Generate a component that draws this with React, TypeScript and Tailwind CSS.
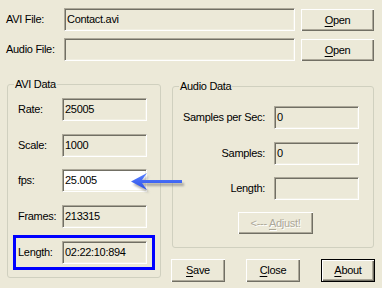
import React from 'react';

const sunken =
  'h-[23px] border border-t-[#aca899] border-l-[#aca899] border-b-white border-r-white shadow-[inset_1px_1px_0_#716f64,inset_-1px_-1px_0_#f1efe2] flex items-center pl-[2px] whitespace-nowrap';

const raised =
  'flex items-center justify-center bg-[#ece9d8] shadow-[inset_1px_1px_0_#ffffff,inset_-1px_-1px_0_#716f64,inset_-2px_-2px_0_#aca899]';

function Field({ value, className }: { value?: string; className: string }) {
  return <div className={`${sunken} ${className}`}>{value}</div>;
}

function Btn({ label, under, className }: { label: string; under: string; className: string }) {
  const rest = label.slice(under.length);
  return (
    <div className={`${raised} ${className}`}>
      <span>
        <span className="underline underline-offset-2">{under}</span>
        {rest}
      </span>
    </div>
  );
}

function AviRow({ label, value, white }: { label: string; value: string; white?: boolean }) {
  return (
    <div className="flex items-center pl-[5px]">
      <span className="w-[44px]">{label}</span>
      <Field value={value} className={white ? 'w-[85px] bg-white' : 'w-[85px] bg-[#ece9d8]'} />
    </div>
  );
}

function AudioRow({ label, value }: { label: string; value: string }) {
  return (
    <div className="flex items-center">
      <span className="w-[92px] text-right">{label}</span>
      <Field value={value} className="ml-[9px] w-[85px] bg-[#ece9d8]" />
    </div>
  );
}

export default function App() {
  return (
    <div className="relative w-[382px] h-[288px] overflow-hidden bg-[#ece9d8] text-black text-[11px] tracking-[-0.3px] font-['Liberation_Sans',Arial,sans-serif]">
      <div className="flex flex-col pt-[8px] pl-[6px]">
        {/* File rows */}
        <div className="flex items-start">
          <span className="w-[58px] leading-[23px]">AVI File:</span>
          <Field value="Contact.avi" className="w-[231px] bg-[#ece9d8]" />
          <Btn label="Open" under="O" className="ml-[6px] mt-[1px] w-[73px] h-[22px]" />
        </div>
        <div className="flex items-start mt-[7px]">
          <span className="w-[58px] leading-[23px]">Audio File:</span>
          <Field className="w-[231px] bg-[#ece9d8]" />
          <Btn label="Open" under="O" className="ml-[6px] mt-[1px] w-[73px] h-[22px]" />
        </div>

        <div className="flex items-start mt-[16px]">
          {/* AVI Data */}
          <fieldset className="m-0 p-0 ml-[1px] w-[154px] h-[201px] border border-[#d0d0bf] rounded-[3px]">
            <legend className="ml-[6px] px-[1px] leading-[14px]">AVI Data</legend>
            <div className="flex flex-col pl-[5px]">
              <div className="mt-[7px]">
                <AviRow label="Rate:" value="25005" />
              </div>
              <div className="mt-[13px]">
                <AviRow label="Scale:" value="1000" />
              </div>
              <div className="mt-[12px]">
                <AviRow label="fps:" value="25.005" white />
              </div>
              <div className="mt-[13px]">
                <AviRow label="Frames:" value="213315" />
              </div>
              <div className="mt-[7px] w-[142px] h-[35px] border-[3px] border-[#0000ff] flex items-center pl-[2px]">
                <span className="w-[44px]">Length:</span>
                <Field value="02:22:10:894" className="w-[85px] bg-[#ece9d8]" />
              </div>
            </div>
          </fieldset>

          {/* Audio Data + buttons */}
          <div className="flex flex-col ml-[10px]">
            <fieldset className="m-0 p-0 mt-[2px] ml-[1px] w-[202px] h-[169px] border border-[#d0d0bf] rounded-[3px]">
              <legend className="ml-[6px] px-[1px] leading-[14px]">Audio Data</legend>
              <div className="flex flex-col">
                <div className="mt-[13px]">
                  <AudioRow label="Samples per Sec:" value="0" />
                </div>
                <div className="mt-[13px]">
                  <AudioRow label="Samples:" value="0" />
                </div>
                <div className="mt-[12px]">
                  <AudioRow label="Length:" value="" />
                </div>
                <div className="mt-[12px] ml-[65px] w-[75px] h-[22px] flex items-center justify-center shadow-[inset_1px_1px_0_#ffffff,inset_-1px_-1px_0_#716f64,inset_-2px_-2px_0_#aca899] text-[#aca899] [text-shadow:1px_1px_0_#ffffff]">
                  <span>
                    &lt;--- <span className="underline underline-offset-2">A</span>djust!
                  </span>
                </div>
              </div>
            </fieldset>
            <div className="flex mt-[11px] gap-[21px]">
              <Btn label="Save" under="S" className="w-[54px] h-[23px]" />
              <Btn label="Close" under="C" className="w-[54px] h-[23px]" />
              <Btn label="About" under="A" className="w-[54px] h-[23px] border border-black" />
            </div>
          </div>
        </div>
      </div>

      {/* Blue pointer arrow over the fps field */}
      <svg className="absolute left-[125px] top-[168px]" width="64" height="28" viewBox="0 0 64 28">
        <defs>
          <filter id="blur" x="-20%" y="-40%" width="140%" height="180%">
            <feGaussianBlur stdDeviation="1.2" />
          </filter>
          <linearGradient id="arrowFill" x1="0" y1="0" x2="0" y2="1">
            <stop offset="0" stopColor="#5a82ff" />
            <stop offset="1" stopColor="#2a4fe8" />
          </linearGradient>
        </defs>
        <path
          d="M8 16.5 L24 8 L19 15 L59 15 L59 18 L19 18 L24 25 Z"
          fill="#7a7a7a"
          opacity="0.6"
          filter="url(#blur)"
        />
        <path d="M6 13.5 L22 5 L17 12 L57 12 L57 15 L17 15 L22 22 Z" fill="url(#arrowFill)" />
      </svg>
    </div>
  );
}
